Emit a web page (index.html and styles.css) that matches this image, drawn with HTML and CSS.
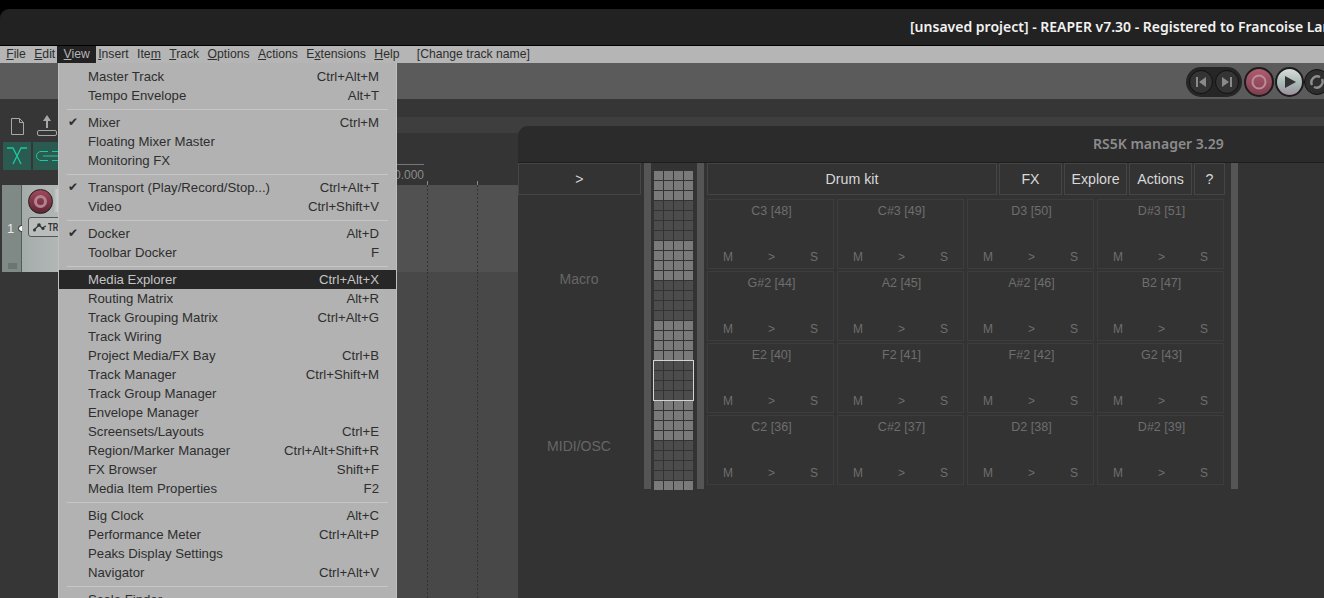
FILE: index.html
```html
<!DOCTYPE html>
<html lang="en">
<head>
    <meta charset="UTF-8">
    <meta name="viewport" content="width=device-width, initial-scale=1.0">
    <title>REAPER</title>
    <link rel="stylesheet" href="styles.css">
</head>
<body>
    <div class="app">
        <header class="titlebar">[unsaved project] - REAPER v7.30 - Registered to Francoise Lamy</header>
        <nav class="menubar">
            <span class="menu"><u>F</u>ile</span>
            <span class="menu"><u>E</u>dit</span>
            <span class="menu active"><u>V</u>iew</span>
            <span class="menu"><u>I</u>nsert</span>
            <span class="menu">Ite<u>m</u></span>
            <span class="menu"><u>T</u>rack</span>
            <span class="menu"><u>O</u>ptions</span>
            <span class="menu"><u>A</u>ctions</span>
            <span class="menu">E<u>x</u>tensions</span>
            <span class="menu"><u>H</u>elp</span>
            <span class="menu hint">[Change track name]</span>
        </nav>
        <div class="toolbar">
            <div class="transport">
                <div class="pill">
                    <button class="tbtn"><svg width="14" height="12" viewBox="0 0 14 12"><path d="M2 1h2v10H2zM12 1v10L5 6z" fill="#8a8a8a"/></svg></button>
                    <button class="tbtn"><svg width="14" height="12" viewBox="0 0 14 12"><path d="M10 1h2v10h-2zM2 1v10l7-5z" fill="#8a8a8a"/></svg></button>
                </div>
                <button class="tbtn big rec"><svg width="18" height="18" viewBox="0 0 18 18"><circle cx="9" cy="9" r="6.500" fill="none" stroke="#b98e9a" stroke-width="2"/></svg></button>
                <button class="tbtn big play"><svg width="14" height="14" viewBox="0 0 14 14"><path d="M2 1l11 6-11 6z" fill="#333"/></svg></button>
                <button class="tbtn loop"><svg width="16" height="16" viewBox="0 0 16 16"><path d="M3 11a6 6 0 0 1 8-8M13 5a6 6 0 0 1-8 8" fill="none" stroke="#8f8f8f" stroke-width="2.400"/></svg></button>
            </div>
        </div>
        <div class="workspace">
            <aside class="tcp">
                <div class="tcp-tools">
                    <svg class="tool-doc" width="13" height="17" viewBox="0 0 13 17"><path d="M.5.5h8l4 4v12H.5zM8.500.5v4h4" fill="none" stroke="#a8a8a8"/></svg>
                    <svg width="22" height="22" viewBox="0 0 22 22"><path d="M11 0l4 6h-3v7h-2V6H7z" fill="#a8a8a8"/><rect x="1.500" y="15.500" width="19" height="5" rx="1.500" fill="none" stroke="#a8a8a8"/></svg>
                </div>
                <div class="tcp-toggles">
                    <span class="toggle"><svg width="26" height="26" viewBox="0 0 26 26"><path d="M3 5h6l8 16M23 5h-6L9 21" fill="none" stroke="#1cc9a0" stroke-width="1.300"/></svg></span>
                    <span class="toggle"><svg width="26" height="26" viewBox="0 0 26 26"><path d="M14 8.500H7a4.500 4.500 0 0 0 0 9h7M9 13h15M18 8.500h7M18 17.500h7" fill="none" stroke="#1cc9a0"/></svg></span>
                </div>
                <div class="track">
                    <div class="track-num">
                        <span class="num">1</span>
                        <span class="folder"></span>
                    </div>
                    <span class="track-dot"></span>
                    <div class="track-body">
                        <span class="fader"></span>
                        <span class="arm"><span class="arm-core"></span></span>
                        <span class="trim"><svg width="14" height="10" viewBox="0 0 14 10"><path d="M1 8l5-5 3 3 4-2" fill="none" stroke="#333" stroke-width="1.200"/><circle cx="6" cy="3" r="1.800" fill="#333"/><circle cx="1.500" cy="8" r="1.500" fill="#333"/><circle cx="10" cy="6.500" r="1.500" fill="#333"/></svg><span class="trim-label">TRIM</span></span>
                    </div>
                </div>
            </aside>
            <section class="arrange">
                <div class="band"></div>
                <div class="ruler">
                    <span class="ruler-bar"></span>
                    <span class="ruler-time">0.000</span>
                    <span class="tick one"></span>
                    <span class="tick two"></span>
                </div>
                <div class="lane first"></div>
                <div class="lane rest"></div>
            </section>
        </div>
    </div>

    <section class="rs5k">
        <div class="rs5k-title">RS5K manager 3.29</div>
        <div class="rs5k-body">
            <div class="side">
                <button class="btn side-btn">&gt;</button>
                <div class="side-label macro">Macro</div>
                <div class="side-label midi">MIDI/OSC</div>
            </div>
            <div class="vbar"></div>
            <div class="keys"><span class="keys-view"></span></div>
            <div class="vbar"></div>
            <div class="rack">
                <div class="rack-head">
                    <button class="btn kit">Drum kit</button>
                    <button class="btn fx">FX</button>
                    <button class="btn explore">Explore</button>
                    <button class="btn actions">Actions</button>
                    <button class="btn help">?</button>
                </div>
                <div class="pads">
                    <div class="pad"><div class="pad-name">C3 [48]</div><div class="pad-ctl"><span>M</span><span>&gt;</span><span>S</span></div></div>
                    <div class="pad"><div class="pad-name">C#3 [49]</div><div class="pad-ctl"><span>M</span><span>&gt;</span><span>S</span></div></div>
                    <div class="pad"><div class="pad-name">D3 [50]</div><div class="pad-ctl"><span>M</span><span>&gt;</span><span>S</span></div></div>
                    <div class="pad"><div class="pad-name">D#3 [51]</div><div class="pad-ctl"><span>M</span><span>&gt;</span><span>S</span></div></div>
                    <div class="pad"><div class="pad-name">G#2 [44]</div><div class="pad-ctl"><span>M</span><span>&gt;</span><span>S</span></div></div>
                    <div class="pad"><div class="pad-name">A2 [45]</div><div class="pad-ctl"><span>M</span><span>&gt;</span><span>S</span></div></div>
                    <div class="pad"><div class="pad-name">A#2 [46]</div><div class="pad-ctl"><span>M</span><span>&gt;</span><span>S</span></div></div>
                    <div class="pad"><div class="pad-name">B2 [47]</div><div class="pad-ctl"><span>M</span><span>&gt;</span><span>S</span></div></div>
                    <div class="pad"><div class="pad-name">E2 [40]</div><div class="pad-ctl"><span>M</span><span>&gt;</span><span>S</span></div></div>
                    <div class="pad"><div class="pad-name">F2 [41]</div><div class="pad-ctl"><span>M</span><span>&gt;</span><span>S</span></div></div>
                    <div class="pad"><div class="pad-name">F#2 [42]</div><div class="pad-ctl"><span>M</span><span>&gt;</span><span>S</span></div></div>
                    <div class="pad"><div class="pad-name">G2 [43]</div><div class="pad-ctl"><span>M</span><span>&gt;</span><span>S</span></div></div>
                    <div class="pad"><div class="pad-name">C2 [36]</div><div class="pad-ctl"><span>M</span><span>&gt;</span><span>S</span></div></div>
                    <div class="pad"><div class="pad-name">C#2 [37]</div><div class="pad-ctl"><span>M</span><span>&gt;</span><span>S</span></div></div>
                    <div class="pad"><div class="pad-name">D2 [38]</div><div class="pad-ctl"><span>M</span><span>&gt;</span><span>S</span></div></div>
                    <div class="pad"><div class="pad-name">D#2 [39]</div><div class="pad-ctl"><span>M</span><span>&gt;</span><span>S</span></div></div>
                </div>
            </div>
            <div class="vbar last"></div>
        </div>
    </section>

    <div class="dropdown">
        <div class="item"><span>Master Track</span><span>Ctrl+Alt+M</span></div>
        <div class="item"><span>Tempo Envelope</span><span>Alt+T</span></div>
        <div class="sep"></div>
        <div class="item checked"><span>Mixer</span><span>Ctrl+M</span></div>
        <div class="item"><span>Floating Mixer Master</span></div>
        <div class="item"><span>Monitoring FX</span></div>
        <div class="sep"></div>
        <div class="item checked"><span>Transport (Play/Record/Stop...)</span><span>Ctrl+Alt+T</span></div>
        <div class="item"><span>Video</span><span>Ctrl+Shift+V</span></div>
        <div class="sep"></div>
        <div class="item checked"><span>Docker</span><span>Alt+D</span></div>
        <div class="item"><span>Toolbar Docker</span><span>F</span></div>
        <div class="sep"></div>
        <div class="item hover"><span>Media Explorer</span><span>Ctrl+Alt+X</span></div>
        <div class="item"><span>Routing Matrix</span><span>Alt+R</span></div>
        <div class="item"><span>Track Grouping Matrix</span><span>Ctrl+Alt+G</span></div>
        <div class="item"><span>Track Wiring</span></div>
        <div class="item"><span>Project Media/FX Bay</span><span>Ctrl+B</span></div>
        <div class="item"><span>Track Manager</span><span>Ctrl+Shift+M</span></div>
        <div class="item"><span>Track Group Manager</span></div>
        <div class="item"><span>Envelope Manager</span></div>
        <div class="item"><span>Screensets/Layouts</span><span>Ctrl+E</span></div>
        <div class="item"><span>Region/Marker Manager</span><span>Ctrl+Alt+Shift+R</span></div>
        <div class="item"><span>FX Browser</span><span>Shift+F</span></div>
        <div class="item"><span>Media Item Properties</span><span>F2</span></div>
        <div class="sep"></div>
        <div class="item"><span>Big Clock</span><span>Alt+C</span></div>
        <div class="item"><span>Performance Meter</span><span>Ctrl+Alt+P</span></div>
        <div class="item"><span>Peaks Display Settings</span></div>
        <div class="item"><span>Navigator</span><span>Ctrl+Alt+V</span></div>
        <div class="sep"></div>
        <div class="item"><span>Scale Finder</span></div>
    </div>
</body>
</html>
```

FILE: styles.css
```css
*{
    margin:0;
    padding:0;
    box-sizing:border-box;
}
html,body{
    height:100%;
    overflow:hidden;
}
body{
    background-color:#000;
    font-family:"Liberation Sans",sans-serif;
    font-size:13px;
    position:relative;
}
button{
    font-family:inherit;
    cursor:default;
}
.app{
    display:flex;
    flex-direction:column;
    height:100%;
    padding-top:9px;
}

/* window chrome */
.titlebar{
    height:37px;
    flex:none;
    padding-left:910px;
    line-height:36px;
    background-color:#222;
    border-radius:9px 0 0 0;
    border-bottom:1px solid #000;
    color:#f2f2f2;
    font-family:"Noto Sans",sans-serif;
    font-size:14px;
    font-weight:600;
    white-space:nowrap;
    overflow:hidden;
}
.menubar{
    display:flex;
    height:17px;
    flex:none;
    padding-left:2px;
    background-color:#b5b5b5;
    color:#2e2e2e;
    font-size:12.200px;
    line-height:16px;
}
.menu{
    padding:0 4.200px;
}
.menu.active{
    padding:0 6.200px;
    margin:0 -2px;
    background-color:#222;
    color:#b5b5b5;
}
.menu.hint{
    margin-left:9px;
}

/* toolbar */
.toolbar{
    height:36px;
    flex:none;
    background-color:#5b5b5b;
    padding:2px 0 0 1186px;
    overflow:hidden;
    white-space:nowrap;
}
.transport{
    display:flex;
    align-items:center;
    height:34px;
    width:160px;
}
.pill{
    display:flex;
    align-items:center;
    gap:2px;
    padding:0 3px;
    height:30px;
    background-color:#262626;
    border-radius:15px;
}
.tbtn{
    display:flex;
    align-items:center;
    justify-content:center;
    width:24px;
    height:24px;
    flex:none;
    border:1px solid #111;
    border-radius:50%;
    background-color:#343434;
}
.tbtn.big{
    width:30px;
    height:30px;
    border:2px solid #1c1c1c;
}
.tbtn.rec{
    margin-left:2px;
    background:linear-gradient(#b05c6e,#7e3f50);
}
.tbtn.play{
    width:29px;
    margin-left:1px;
    background:linear-gradient(#dcdcdc,#a9bdb7 50%,#9c8f9c);
}
.tbtn.loop{
    width:26px;
    height:26px;
    background-color:#2e2e2e;
}

/* track panel and arrange view */
.workspace{
    display:flex;
    flex:1;
    min-height:0;
    background-color:#363636;
}
.tcp{
    width:397px;
    flex:none;
    padding-top:16px;
}
.tcp-tools{
    display:flex;
    align-items:flex-start;
    gap:12px;
    height:26px;
    padding-left:11px;
}
.tool-doc{
    margin-top:3px;
}
.tcp-toggles{
    display:flex;
    gap:2px;
    margin-top:1px;
    padding-left:3px;
}
.toggle{
    display:flex;
    align-items:center;
    justify-content:center;
    width:28px;
    height:28px;
    background-color:#2b5b50;
}
.track{
    display:flex;
    position:relative;
    height:87px;
    margin:15px 0 0 2px;
    background-color:#9fa7a5;
}
.track-num{
    position:relative;
    width:20px;
    background-color:#7f8a87;
    border-right:1px solid #565c5b;
    color:#e8e8e8;
    font-size:13px;
}
.num{
    position:absolute;
    left:5px;
    top:36px;
}
.folder{
    position:absolute;
    left:6px;
    bottom:3px;
    width:9px;
    height:6px;
    background-color:#6c7573;
}
.track-dot{
    position:absolute;
    left:16px;
    top:40px;
    width:7px;
    height:7px;
    border:1px solid #222;
    border-radius:50%;
    background-color:#fff;
}
.track-body{
    position:relative;
    flex:1;
    background:linear-gradient(90deg,#a4acaa,#bcbfbf 60px);
}
.fader{
    position:absolute;
    left:30px;
    top:4px;
    width:300px;
    height:23px;
    background:linear-gradient(90deg,#a4acaa,#e6e6e6 10px);
}
.arm{
    position:absolute;
    left:6px;
    top:4px;
    display:flex;
    align-items:center;
    justify-content:center;
    width:25px;
    height:25px;
    border:1px solid #1e1e1e;
    border-radius:50%;
    background:linear-gradient(#a04a5c,#5e2535);
}
.arm-core{
    width:13px;
    height:13px;
    border:3px solid #b5838f;
    border-radius:50%;
}
.trim{
    position:absolute;
    left:6px;
    top:32px;
    display:flex;
    align-items:center;
    gap:1px;
    width:80px;
    height:20px;
    padding-left:4px;
    border:1px solid #555;
    border-radius:3px;
    background-color:#b9bdbc;
    color:#333;
    font-size:11px;
    font-weight:bold;
}
.trim-label{
    transform:scaleX(.7);
    transform-origin:left;
}
.arrange{
    flex:1;
    padding-top:18px;
}
.band{
    height:16px;
    background-color:#3e3e3e;
}
.ruler{
    position:relative;
    height:52px;
    background-color:#343434;
    overflow:hidden;
}
.ruler-bar{
    position:absolute;
    left:0;
    top:31px;
    width:27px;
    height:1px;
    background-color:#777;
}
.ruler-time{
    position:absolute;
    left:-3px;
    top:35px;
    color:#8b8b8b;
    font-size:12px;
}
.tick{
    position:absolute;
    bottom:0;
    width:1px;
    height:4px;
    background-color:#8a8a8a;
}
.tick.one{
    left:30px;
}
.tick.two{
    left:80px;
}
.lane{
    background-image:
        repeating-linear-gradient(#333 0 2px,transparent 2px 4px),
        repeating-linear-gradient(#333 0 2px,transparent 2px 4px);
    background-size:1px 100%;
    background-position:30px 0,80px 0;
    background-repeat:no-repeat;
}
.lane.first{
    height:87px;
    background-color:#515151;
}
.lane.rest{
    height:326px;
    background-color:#484848;
}

/* RS5K manager window */
.rs5k{
    position:absolute;
    left:518px;
    top:126px;
    width:900px;
    height:472px;
    background-color:#333;
    border-radius:10px 0 0 0;
    color:#6e6e6e;
}
.rs5k-title{
    height:37px;
    padding-left:575px;
    line-height:36px;
    background-color:#2b2b2b;
    border-radius:10px 0 0 0;
    border-bottom:1px solid #1d1d1d;
    color:#8c8c8c;
    font-family:"Noto Sans",sans-serif;
    font-size:14px;
    font-weight:600;
    white-space:nowrap;
}
.rs5k-body{
    display:flex;
    align-items:flex-start;
}
.btn{
    height:32px;
    background-color:#333;
    border:1px solid #454545;
    color:#d8d8d8;
    font-size:14.200px;
}
.side{
    position:relative;
    width:126px;
    height:327px;
    flex:none;
    text-align:center;
}
.side-btn{
    display:block;
    width:123px;
}
.side-label{
    position:absolute;
    left:0;
    width:122px;
    color:#666;
    font-size:14px;
}
.macro{
    top:108px;
}
.midi{
    top:275px;
}
.vbar{
    width:7px;
    height:326px;
    flex:none;
    background-color:#555;
}
.keys{
    position:relative;
    width:46px;
    height:327px;
    flex:none;
    padding:8px 3px 0;
    background-clip:content-box;
    background-origin:content-box;
    background-image:
        repeating-linear-gradient(90deg,transparent 0 9px,#333 9px 10px),
        repeating-linear-gradient(transparent 0 9px,#333 9px 10px),
        linear-gradient(#4c4c4c 0 40px,#7a7a7a 40px 80px);
    background-size:100% 100%,100% 100%,100% 80px;
    background-position:0 0,0 0,0 30px;
    background-repeat:no-repeat,no-repeat,repeat-y;
}
.keys-view{
    position:absolute;
    left:2px;
    top:197px;
    width:41px;
    height:41px;
    border:1px solid #d4d4d4;
}
.rack{
    width:524px;
    flex:none;
    padding:0 3px;
}
.rack-head{
    display:flex;
    gap:2px;
}
.kit{
    width:290px;
}
.fx,
.explore,
.actions{
    width:63px;
}
.help{
    width:31px;
}
.pads{
    display:grid;
    grid-template-columns:repeat(4,127px);
    grid-auto-rows:70px;
    gap:2px 3px;
    margin-top:4px;
}
.pad{
    display:flex;
    flex-direction:column;
    justify-content:space-between;
    padding:4px 0;
    border:1px solid #3d3d3d;
    text-align:center;
    font-size:12.500px;
}
.pad-name{
    padding-left:2px;
}
.pad-ctl{
    display:flex;
    justify-content:space-between;
    padding:0 15px;
    font-size:12px;
}
.vbar.last{
    margin-left:3px;
}

/* view menu */
.dropdown{
    position:absolute;
    left:58px;
    top:63px;
    width:339px;
    padding-top:4px;
    background-color:#b2b2b2;
    border:1px solid #c0c0c0;
    border-top:none;
    color:#2e2e2e;
    font-size:13.200px;
}
.item{
    display:flex;
    justify-content:space-between;
    position:relative;
    height:19px;
    padding:0 17px 0 29px;
    line-height:19px;
    white-space:nowrap;
}
.item.hover{
    background-color:#272727;
    color:#c4c4c4;
}
.item.checked::before{
    content:"\2714";
    position:absolute;
    left:9px;
    font-family:"DejaVu Sans",sans-serif;
    font-size:12px;
}
.sep{
    height:1px;
    margin:4px 8px 3px;
    background-color:#c6c6c6;
}
```
